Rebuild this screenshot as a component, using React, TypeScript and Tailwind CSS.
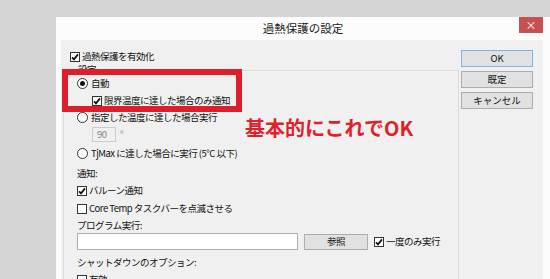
import React from 'react';

const Check = ({ checked }: { checked?: boolean }) => (
  <span className="flex h-[10px] w-[10px] shrink-0 items-center justify-center border border-[#333333] bg-white">
    {checked && (
      <svg viewBox="0 0 8 8" className="h-[8px] w-[8px]">
        <path d="M1 4.3 L3 6.4 L7 1.4" fill="none" stroke="#111111" strokeWidth="1.7" />
      </svg>
    )}
  </span>
);

const Radio = ({ checked }: { checked?: boolean }) => (
  <span className="flex h-[11px] w-[11px] shrink-0 items-center justify-center rounded-full border border-[#333333] bg-white">
    {checked && <span className="h-[5px] w-[5px] rounded-full bg-[#111111]" />}
  </span>
);

const WinButton = ({ label, isDefault }: { label: string; isDefault?: boolean }) => (
  <button
    className={`flex h-[17px] w-[72px] items-center justify-center bg-[#e1e1e1] text-[9.5px] ${
      isDefault ? 'border border-[#7eb4ea]' : 'border border-[#adadad]'
    }`}
  >
    {label}
  </button>
);

const App: React.FC = () => {
  return (
    <div className="relative h-[279px] w-[550px] overflow-hidden bg-[#d5d5d5] pl-[56px] pt-[17px] font-['Noto_Sans_CJK_JP',sans-serif] text-[#111111]">
      {/* Dialog */}
      <div className="flex h-[262px] w-[494px] flex-col bg-[#fcfcfc]">
        {/* Title bar */}
        <div className="relative flex h-[23px] shrink-0 items-center justify-center text-[11.5px] text-[#1b1b1b]">
          過熱保護の設定
          <div className="absolute right-[7px] top-0 flex h-[16px] w-[24px] items-center justify-center bg-[#c75050] text-[11px] leading-none text-white">
            ×
          </div>
        </div>

        {/* Content */}
        <div className="ml-[5px] mr-[7px] flex flex-1 bg-[#f0f0f0] text-[9.5px] tracking-[-0.5px]">
          {/* Left column */}
          <div className="w-[398px] pl-[2px] pt-[8px]">
            <div className="ml-[7px] flex h-[17px] items-center gap-[2px]">
              <Check checked />
              <span>過熱保護を有効化</span>
            </div>

            <div className="relative mt-[5px] h-[230px] border border-b-0 border-[#dcdcdc] pl-[13px] pt-[4px]">
              <span className="absolute left-[13px] top-[-9px] bg-[#f0f0f0] px-px">設定</span>

              <div className="flex h-[17px] items-center gap-[3px]">
                <Radio checked />
                <span>自動</span>
              </div>
              <div className="ml-[15px] flex h-[17px] items-center gap-[2px]">
                <Check checked />
                <span>限界温度に達した場合のみ通知</span>
              </div>
              <div className="flex h-[17px] items-center gap-[3px]">
                <Radio />
                <span>指定した温度に達した場合実行</span>
              </div>
              <div className="ml-[15px] mt-px flex h-[15px] items-center gap-[4px]">
                <div className="flex h-[15px] w-[24px] items-center border border-[#cccccc] bg-[#f0f0f0] pl-[4px] text-[#838383]">
                  90
                </div>
                <span className="self-start text-[#838383]">°</span>
              </div>
              <div className="mt-[3px] flex h-[17px] items-center gap-[3px]">
                <Radio />
                <span>TjMax に達した場合に実行 (5°C 以下)</span>
              </div>

              <div className="mt-[3px] flex h-[17px] items-center">通知:</div>
              <div className="flex h-[17px] items-center gap-[2px]">
                <Check checked />
                <span>バルーン通知</span>
              </div>
              <div className="mt-px flex h-[17px] items-center gap-[2px]">
                <Check />
                <span>Core Temp タスクバーを点滅させる</span>
              </div>

              <div className="flex h-[16px] items-center">プログラム実行:</div>
              <div className="flex h-[17px] items-center">
                <div className="h-[17px] w-[221px] border border-[#abadb3] bg-white" />
                <button className="ml-[6px] flex h-[16px] w-[64px] items-center justify-center border border-[#adadad] bg-[#e1e1e1]">
                  参照
                </button>
                <div className="ml-[6px] flex items-center gap-[2px]">
                  <Check checked />
                  <span>一度のみ実行</span>
                </div>
              </div>

              <div className="mt-[4px] flex h-[17px] items-center">シャットダウンのオプション:</div>
              <div className="flex h-[17px] items-center gap-[2px]">
                <Check />
                <span>有効</span>
              </div>
            </div>
          </div>

          {/* Right column: buttons */}
          <div className="ml-[2px] flex w-[72px] flex-col gap-[4px] pt-[10px] tracking-normal">
            <WinButton label="OK" isDefault />
            <WinButton label="既定" />
            <WinButton label="キャンセル" />
          </div>
        </div>
      </div>

      {/* Annotation overlay */}
      <div className="absolute left-[62px] top-[69px] h-[43px] w-[180px] border-[6px] border-[#dc1f2b]" />
      <div className="absolute left-[245px] top-[118px] text-[20px] font-bold leading-[20px] text-[#e0202a]">
        基本的にこれでOK
      </div>
    </div>
  );
};

export default App;
